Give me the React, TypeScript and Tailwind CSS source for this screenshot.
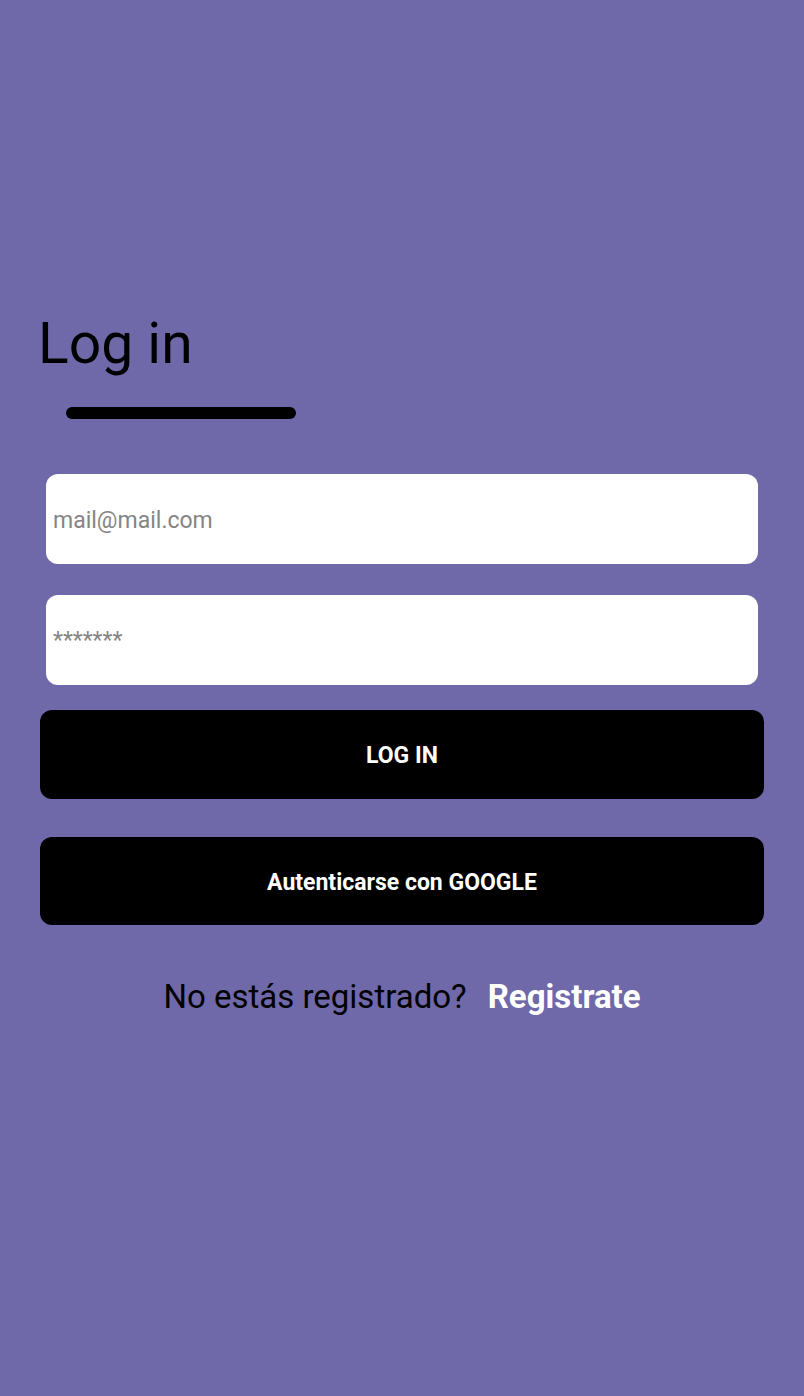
import { useState } from 'react';

export default function App() {
  const [mail, setMail] = useState('');
  const [pass, setPass] = useState('');

  return (
    <main className="min-h-[1396px] w-full bg-[#6f69aa] font-['Roboto','Liberation_Sans',sans-serif]">
      <div className="px-10 pt-[310px]">
        {/* titulo */}
        <h1 className="text-[57px] leading-[67px] font-normal text-black -ml-[2px]">Log in</h1>
        <div className="mt-[30px] ml-[26px] w-[230px] h-[12px] rounded-full bg-black" />

        {/* formulario */}
        <div className="mt-[55px] mx-[6px] flex flex-col gap-[31px]">
          <input
            type="email"
            value={mail}
            onChange={(e) => setMail(e.target.value)}
            placeholder="mail@mail.com"
            className="h-[90px] w-full rounded-xl bg-white pl-[7px] pt-[2px] text-[23px] text-black placeholder:text-[#858585] outline-none"
          />
          <input
            type="password"
            value={pass}
            onChange={(e) => setPass(e.target.value)}
            placeholder="*******"
            className="h-[90px] w-full rounded-xl bg-white pl-[7px] text-[23px] text-black placeholder:text-[#858585] outline-none"
          />
        </div>

        <button className="mt-[25px] h-[89px] w-full rounded-xl bg-black pt-[4px] text-white text-[23px] font-bold">
          LOG IN
        </button>
        <button className="mt-[38px] h-[88px] w-full rounded-xl bg-black pt-[4px] text-white text-[23px] font-bold">
          Autenticarse con GOOGLE
        </button>

        <div className="mt-[52px] flex justify-center items-center gap-[21px] text-[33px] leading-[40px]">
          <span className="text-black">No estás registrado?</span>
          <a href="#" className="text-white font-bold">Registrate</a>
        </div>
      </div>
    </main>
  );
}
